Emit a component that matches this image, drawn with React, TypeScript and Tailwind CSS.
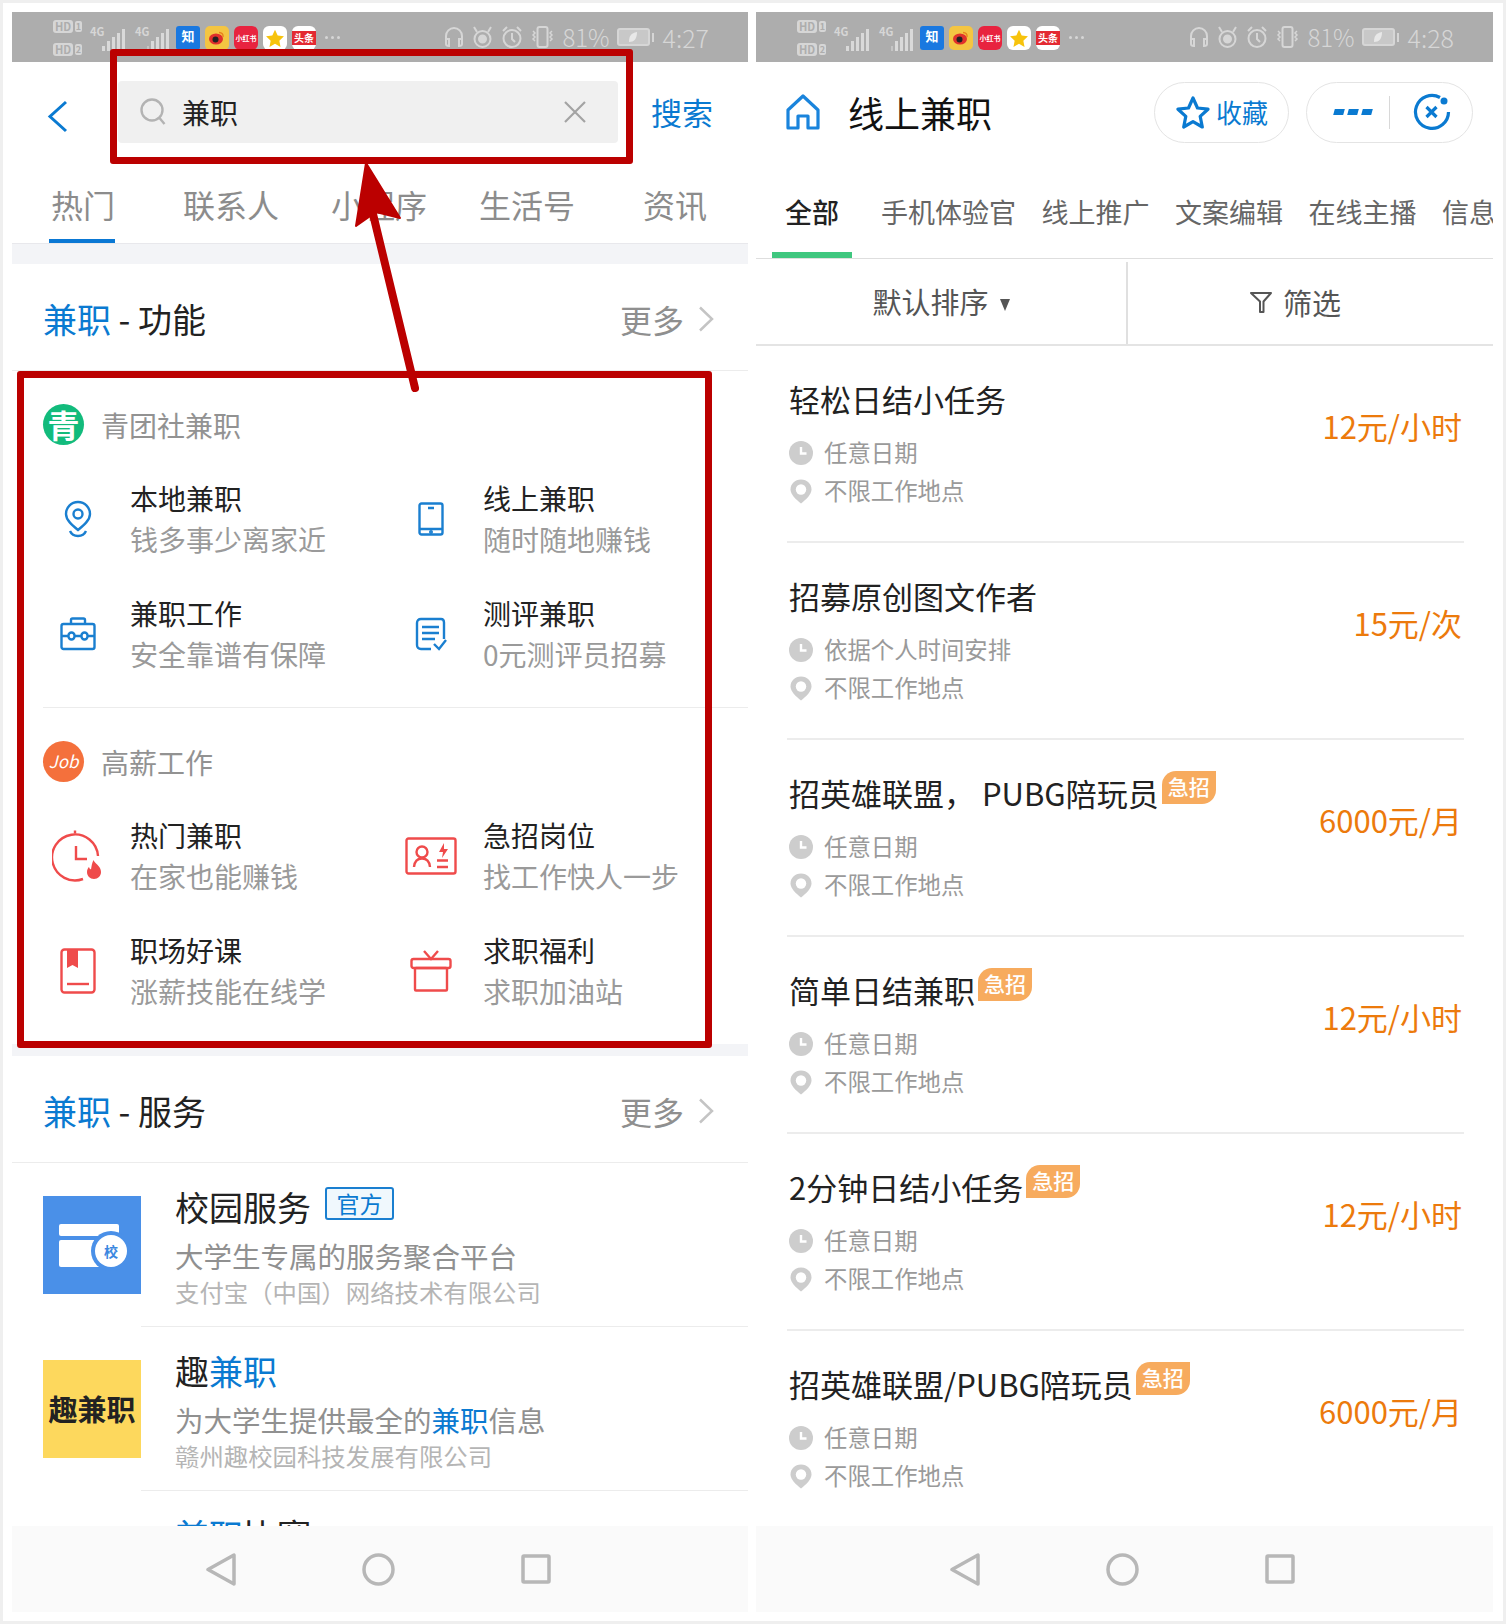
import React from "react";

const BLUE = "#0a7ad1";

function Clock() {
  return (
    <svg width="24" height="24" viewBox="0 0 24 24">
      <circle cx="12" cy="12" r="12" fill="#cdcdcd" />
      <path d="M12 6v6.5h5.5" fill="none" stroke="#fff" strokeWidth="2.4" />
    </svg>
  );
}

function Pin() {
  return (
    <svg width="24" height="25" viewBox="0 0 24 25">
      <path d="M12 0.5C5.8 0.5 1.5 5 1.5 10.5c0 5 5.5 10 10.5 14 5-4 10.5-9 10.5-14C22.500 5 18.200 0.5 12 0.5z" fill="#cdcdcd" />
      <circle cx="12" cy="10.500" r="5.200" fill="#fff" />
    </svg>
  );
}

function StatusIcons() {
  const Hd = ({ n }: { n: string }) => (
    <div className="flex items-center gap-[2px] h-[13px]">
      <span className="w-[20px] h-[13px] rounded-[3px] bg-[#d6d6d6] text-[#adadad] text-[11px] leading-[13px] font-bold text-center">HD</span>
      <span className="w-[7px] h-[11px] rounded-[2px] bg-[#d6d6d6] text-[#adadad] text-[9px] leading-[11px] font-bold text-center">{n}</span>
    </div>
  );
  const Signal = ({ dim }: { dim?: boolean }) => (
    <div className="flex items-end gap-[2px] h-[22px] ml-[-1px] mt-[5px]">
      {[5, 10, 14, 18, 22].map((h, i) => (
        <div key={h} className={dim && i < 1 ? "w-[2px] bg-[#c4c4c4]" : "w-[3px] bg-[#d9d9d9]"} style={{ height: h }} />
      ))}
    </div>
  );
  return (
    <div className="flex items-start h-full pl-[41px]">
      <div className="flex flex-col gap-[10px] pt-[8px] w-[37px]">
        <Hd n="1" />
        <Hd n="2" />
      </div>
      <div className="flex items-start mt-[12px]">
        <span className="text-[#d6d6d6] text-[11px] leading-[14px] font-bold w-[13px]">4G</span>
        <Signal />
      </div>
      <div className="flex items-start mt-[12px] ml-[10px]">
        <span className="text-[#d6d6d6] text-[11px] leading-[14px] font-bold w-[13px]">4G</span>
        <Signal dim />
      </div>
      <div className="flex items-start gap-[5px] ml-[7px] mt-[14px]">
        <div className="w-[24px] h-[24px] bg-[#1a78e0] text-white text-[13px] leading-[20px] font-bold text-center overflow-hidden rounded-[3px]">知</div>
        <div className="w-[24px] h-[24px] rounded-[5px] bg-[#f4c542] flex items-center justify-center">
          <svg width="16" height="14" viewBox="0 0 16 14">
            <ellipse cx="7" cy="8" rx="7" ry="5.500" fill="#e0312c" />
            <circle cx="6.500" cy="8.500" r="3" fill="#222" />
            <path d="M10 1.500c3 0 4.500 2 4 4.500" fill="none" stroke="#e8821e" strokeWidth="1.400" />
          </svg>
        </div>
        <div className="w-[24px] h-[24px] rounded-[6px] bg-[#e8233f] text-white text-[7px] leading-[24px] font-bold text-center whitespace-nowrap overflow-hidden">小红书</div>
        <div className="w-[24px] h-[24px] rounded-[6px] bg-white flex items-center justify-center">
          <svg width="20" height="19" viewBox="0 0 24 24">
            <path d="M12 1l3.400 7.300 7.900 1-5.800 5.400 1.500 7.900-7-3.900-7 3.900 1.500-7.900L.7 9.300l7.900-1z" fill="#f7c30c" />
          </svg>
        </div>
        <div className="w-[24px] h-[24px] rounded-[6px] bg-white flex items-center justify-center">
          <div className="w-[24px] h-[14px] bg-[#e32a32] text-white text-[10px] leading-[14px] font-bold text-center whitespace-nowrap overflow-hidden">头条</div>
        </div>
        <div className="flex gap-[3px] ml-[4px] mt-[10px]">
          <div className="w-[3px] h-[3px] rounded-full bg-[#d6d6d6]" />
          <div className="w-[3px] h-[3px] rounded-full bg-[#d6d6d6]" />
          <div className="w-[3px] h-[3px] rounded-full bg-[#d6d6d6]" />
        </div>
      </div>
    </div>
  );
}

function StatusRight({ time }: { time: string }) {
  return (
    <div className="flex items-center gap-[7px] h-full pr-[39px] text-[#d6d6d6]">
      <svg width="20" height="22" viewBox="0 0 20 22" fill="none" stroke="#d6d6d6" strokeWidth="2">
        <path d="M2 14V10a8 8 0 0 1 16 0v4" />
        <path d="M2 13v5c0 1.500 1 2 3 2v-7H2zM18 13v5c0 1.500-1 2-3 2v-7h3z" />
      </svg>
      <svg width="23" height="22" viewBox="0 0 23 22" fill="none" stroke="#d6d6d6" strokeWidth="2">
        <circle cx="11.500" cy="13" r="8" />
        <circle cx="11.500" cy="13" r="3.500" fill="#d6d6d6" />
        <path d="M3 1l3 5M20 1l-3 5" />
      </svg>
      <svg width="22" height="22" viewBox="0 0 22 22" fill="none" stroke="#d6d6d6" strokeWidth="2">
        <circle cx="11" cy="12.500" r="8.500" />
        <path d="M11 7v6l3 3M2 5l4-4M20 5l-4-4" />
      </svg>
      <svg width="25" height="22" viewBox="0 0 25 22" fill="none" stroke="#d6d6d6" strokeWidth="2">
        <rect x="7.500" y="1" width="10" height="20" rx="2" />
        <path d="M3 5l2 2-2 2 2 2-2 2 2 2M22 5l-2 2 2 2-2 2 2 2-2 2" strokeWidth="1.500" />
      </svg>
      <span className="text-[24px] leading-none font-light">81%</span>
      <div className="flex items-center gap-[2px]">
        <div className="w-[33px] h-[18px] rounded-[3px] border-2 border-[#d6d6d6] bg-[#c8c8c8] flex items-center justify-center">
          <svg width="10" height="12" viewBox="0 0 10 12">
            <path d="M9 1C3 2 1 5 1 11c5 0 8-3 8-10z" fill="#e8e8e8" />
          </svg>
        </div>
        <div className="w-[2px] h-[9px] bg-[#d6d6d6]" />
      </div>
      <span className="text-[25px] leading-none font-light ml-[2px]">{time}</span>
    </div>
  );
}

function StatusBar({ time }: { time: string }) {
  return (
    <div className="h-[50px] shrink-0 bg-[#adadad] flex justify-between overflow-hidden">
      <StatusIcons />
      <StatusRight time={time} />
    </div>
  );
}

function NavBar() {
  return (
    <div className="h-[86px] shrink-0 bg-[#fafafa] flex items-center pl-[194px] gap-[126px]">
      <svg width="30" height="33" viewBox="0 0 30 33" fill="none" stroke="#b7b7b7" strokeWidth="3.500" strokeLinejoin="round">
        <path d="M28 2v29L2 16.500z" />
      </svg>
      <svg width="33" height="33" viewBox="0 0 33 33" fill="none" stroke="#b7b7b7" strokeWidth="3.500">
        <circle cx="16.500" cy="16.500" r="14.500" />
      </svg>
      <svg width="30" height="30" viewBox="0 0 30 30" fill="none" stroke="#b7b7b7" strokeWidth="3.500">
        <rect x="2" y="2" width="26" height="26" rx="1" />
      </svg>
    </div>
  );
}

function SectionHead({ name }: { name: string }) {
  return (
    <div className="h-[107px] pl-[31px] pr-[34px] pt-[3px] flex items-center justify-between border-b border-[#ececec] ml-0">
      <div className="text-[34px] leading-[44px] text-[#222]">
        <span className="text-[#0a7ad1]">兼职</span> - {name}
      </div>
      <div className="flex items-center gap-[14px]">
        <span className="text-[32px] leading-[44px] text-[#8f8f8f]">更多</span>
        <svg width="16" height="26" viewBox="0 0 16 26" fill="none" stroke="#c4c4c4" strokeWidth="2.500">
          <path d="M2 1.500L14 13 2 24.500" />
        </svg>
      </div>
    </div>
  );
}

const S = { fill: "none", strokeWidth: 2.4 } as const;

const blueIcons = {
  pin: (
    <svg width="30" height="38" viewBox="0 0 30 38" stroke="#1a7fd0" {...S}>
      <path d="M15 2C8 2 3 7.500 3 14c0 6 6 11 12 16 6-5 12-10 12-16C27 7.500 22 2 15 2z" />
      <circle cx="15" cy="14" r="4.500" />
      <path d="M7 31c1.500 3.500 4.500 5 8 5s6.500-1.500 8-5" />
    </svg>
  ),
  phone: (
    <svg width="26" height="34" viewBox="0 0 26 34" stroke="#1a7fd0" {...S}>
      <rect x="1.500" y="1.500" width="23" height="31" rx="2" />
      <path d="M1.500 27h23M10 6h6" />
      <circle cx="13" cy="30" r="0.800" fill="#1a7fd0" />
    </svg>
  ),
  case: (
    <svg width="36" height="34" viewBox="0 0 36 34" stroke="#1a7fd0" {...S}>
      <rect x="1.500" y="7" width="33" height="25" rx="2" />
      <path d="M11 7V3c0-1 .8-1.500 1.500-1.500h11c.7 0 1.500.5 1.500 1.500v4M1.500 19h7M14.500 19h7M27.500 19h7" />
      <rect x="8.500" y="15.500" width="6" height="7" rx="3" />
      <rect x="21.500" y="15.500" width="6" height="7" rx="3" />
    </svg>
  ),
  doc: (
    <svg width="32" height="34" viewBox="0 0 32 34" stroke="#1a7fd0" {...S}>
      <path d="M16 32H6c-2.500 0-4-1.500-4-4V6c0-2.500 1.500-4 4-4h20c2 0 3 1.500 3 3.500V22" />
      <path d="M7 10h17M7 16h17M7 22h13" />
      <path d="M19 27l5 5 7-9" />
    </svg>
  ),
};

const redIcons = {
  clock: (
    <svg width="52" height="52" viewBox="0 0 52 52" stroke="#ef4b4b" {...S}>
      <path d="M46 26a23 23 0 1 0-15 23" />
      <path d="M23 0.500v3" />
      <path d="M24 16v13h11" />
      <path d="M41.500 30c1 3.500 7.500 6 7.500 12 0 4-3 7-7 7s-7-3-7-7c0-2.500 1-4 2-5 .5 1.500 1 2 2 2.500.5-3.500 1-6.500 2.500-9.500z" fill="#ef4b4b" stroke="none" />
    </svg>
  ),
  card: (
    <svg width="52" height="38" viewBox="0 0 52 38" stroke="#ef4b4b" {...S}>
      <rect x="1.500" y="1.500" width="49" height="35" rx="2" />
      <circle cx="17" cy="15" r="5.500" />
      <path d="M9 30c.5-5 3-8.500 8-8.500s7.500 3.500 8 8.500" />
      <path d="M32 30h11M32 23.500h11" />
      <path d="M39 6l-5 9h4l-1 6 6-9h-4z" fill="#ef4b4b" stroke="none" />
    </svg>
  ),
  book: (
    <svg width="36" height="46" viewBox="0 0 36 46" stroke="#ef4b4b" {...S}>
      <rect x="1.500" y="1.500" width="33" height="43" rx="3" />
      <path d="M7 36h22" />
      <path d="M7 2h11v18l-5.500-3L7 20z" fill="#ef4b4b" stroke="none" />
    </svg>
  ),
  gift: (
    <svg width="42" height="42" viewBox="0 0 42 42" stroke="#ef4b4b" {...S}>
      <rect x="1.500" y="9" width="39" height="9" rx="2" />
      <rect x="5" y="18" width="32" height="22.500" rx="1" />
      <path d="M14 1l7 8 7-8" />
    </svg>
  ),
};

function Item({ icon, title, sub }: { icon: React.ReactNode; title: string; sub: string }) {
  return (
    <div className="flex items-center h-[82px]">
      <div className="w-[70px] mr-[17px] flex justify-center shrink-0">{icon}</div>
      <div className="whitespace-nowrap">
        <div className="text-[28px] leading-[41px] text-[#222]">{title}</div>
        <div className="text-[28px] leading-[41px] text-[#9a9a9a]">{sub}</div>
      </div>
    </div>
  );
}

function LeftPhone() {
  return (
    <div className="w-[736px] h-[1600px] flex flex-col overflow-hidden shrink-0">
      <StatusBar time="4:27" />
      <div className="flex-1 min-h-0 overflow-hidden">
        <div className="h-[108px] flex items-center">
          <svg className="ml-[35px] mr-[50px] shrink-0" width="21" height="33" viewBox="0 0 21 33" fill="none" stroke="#0a7ad1" strokeWidth="3">
            <path d="M19 2L3 16.500 19 31" />
          </svg>
          <div className="w-[500px] h-[62px] bg-[#f0f0f0] rounded-[4px] flex items-center pl-[22px] pr-[32px] mt-[-8px]">
            <svg width="26" height="28" viewBox="0 0 26 28" fill="none" stroke="#b3b3b3" strokeWidth="2.400">
              <circle cx="12" cy="12" r="10.500" />
              <path d="M19.500 20l5 6" />
            </svg>
            <span className="ml-[16px] text-[28px] leading-[40px] text-[#222] flex-1">兼职</span>
            <svg width="22" height="22" viewBox="0 0 22 22" fill="none" stroke="#a3a3a3" strokeWidth="2.200">
              <path d="M1 1l20 20M21 1L1 21" />
            </svg>
          </div>
          <span className="ml-[33px] text-[31px] leading-[40px] text-[#0a7ad1] mt-[-8px] whitespace-nowrap">搜索</span>
        </div>
        <div className="h-[73px] flex ml-[-3px] w-[740px]">
          {["热门", "联系人", "小程序", "生活号", "资讯"].map((t, i) => (
            <div key={t} className="w-[148px] relative flex justify-center pt-[12px] text-[32px] leading-[44px] text-[#8c8c8c]">
              {t}
              {i === 0 && <div className="absolute left-[40px] bottom-0 w-[66px] h-[4px] bg-[#0a78d4]" />}
            </div>
          ))}
        </div>
        <div className="h-[21px] bg-[#f3f4f7] border-t border-[#e8e8ec]" />
        <SectionHead name="功能" />

        <div className="ml-[31px] h-[337px] border-b border-[#ececec] pt-[33px]">
          <div className="flex items-center h-[41px]">
            <div className="w-[41px] h-[41px] rounded-full bg-[#12bb7c] text-white text-[32px] leading-[40px] font-bold text-center">青</div>
            <span className="ml-[17px] text-[28px] leading-[40px] text-[#929292]">青团社兼职</span>
          </div>
          <div className="grid grid-cols-[353px_353px] gap-y-[33px] mt-[33px]">
            <Item icon={blueIcons.pin} title="本地兼职" sub="钱多事少离家近" />
            <Item icon={blueIcons.phone} title="线上兼职" sub="随时随地赚钱" />
            <Item icon={blueIcons.case} title="兼职工作" sub="安全靠谱有保障" />
            <Item icon={blueIcons.doc} title="测评兼职" sub="0元测评员招募" />
          </div>
        </div>

        <div className="ml-[31px] h-[336px] pt-[33px]">
          <div className="flex items-center h-[41px]">
            <div className="w-[41px] h-[41px] rounded-full bg-[#f4703c] text-white text-[17px] leading-[40px] italic text-center">Job</div>
            <span className="ml-[17px] text-[28px] leading-[40px] text-[#929292]">高薪工作</span>
          </div>
          <div className="grid grid-cols-[353px_353px] gap-y-[33px] mt-[33px]">
            <Item icon={redIcons.clock} title="热门兼职" sub="在家也能赚钱" />
            <Item icon={redIcons.card} title="急招岗位" sub="找工作快人一步" />
            <Item icon={redIcons.book} title="职场好课" sub="涨薪技能在线学" />
            <Item icon={redIcons.gift} title="求职福利" sub="求职加油站" />
          </div>
        </div>
        <div className="h-[12px] bg-[#f3f4f7]" />
        <SectionHead name="服务" />

        <div className="ml-[31px] flex h-[164px]">
          <div className="w-[98px] h-[98px] mt-[33px] bg-[#4a90e8] shrink-0 flex items-center justify-center">
            <svg width="98" height="98" viewBox="0 0 98 98">
              <rect x="16" y="28" width="60" height="12" rx="2" fill="#fff" />
              <rect x="16" y="44" width="60" height="27" rx="2" fill="#fff" />
              <circle cx="68" cy="55" r="20" fill="#4a90e8" />
              <circle cx="68" cy="55" r="16" fill="#fff" />
              <text x="68" y="61" textAnchor="middle" fontSize="14" fontWeight="700" fill="#3b87e0">校</text>
            </svg>
          </div>
          <div className="flex-1 pl-[34px] border-b border-[#ececec] pt-[22px] whitespace-nowrap">
            <div className="flex items-center h-[44px]">
              <span className="text-[34px] leading-[44px] text-[#222]">校园服务</span>
              <span className="ml-[14px] w-[69px] h-[33px] mt-[-8px] rounded-[3px] border-2 border-[#1a7fd0] bg-[#f0f8fd] text-[#0a7ad1] text-[23px] leading-[29px] text-center">官方</span>
            </div>
            <div className="mt-[7px] text-[28.500px] leading-[40px] text-[#909090]">大学生专属的服务聚合平台</div>
            <div className="text-[24.400px] leading-[32px] text-[#b5b5b5]">支付宝（中国）网络技术有限公司</div>
          </div>
        </div>

        <div className="ml-[31px] flex h-[164px]">
          <div className="w-[98px] h-[98px] mt-[33px] bg-[#fdd85d] shrink-0 flex items-center justify-center text-[29px] font-bold text-[#222] whitespace-nowrap">趣兼职</div>
          <div className="flex-1 pl-[34px] border-b border-[#ececec] pt-[22px] whitespace-nowrap">
            <div className="text-[34px] leading-[44px] text-[#222]">
              趣<span className="text-[#0a7ad1]">兼职</span>
            </div>
            <div className="mt-[7px] text-[28.500px] leading-[40px] text-[#909090]">
              为大学生提供最全的<span className="text-[#0a7ad1]">兼职</span>信息
            </div>
            <div className="text-[24.400px] leading-[32px] text-[#b5b5b5]">赣州趣校园科技发展有限公司</div>
          </div>
        </div>

        <div className="ml-[31px] flex h-[164px]">
          <div className="w-[98px] shrink-0" />
          <div className="flex-1 pl-[34px] pt-[22px] text-[34px] leading-[44px] text-[#222]">
            <span className="text-[#0a7ad1]">兼职</span>比赛
          </div>
        </div>
      </div>
      <NavBar />
    </div>
  );
}

const jobs = [
  { title: "轻松日结小任务", price: "12元/小时", date: "任意日期", hot: false },
  { title: "招募原创图文作者", price: "15元/次", date: "依据个人时间安排", hot: false },
  { title: "招英雄联盟， PUBG陪玩员", price: "6000元/月", date: "任意日期", hot: true },
  { title: "简单日结兼职", price: "12元/小时", date: "任意日期", hot: true },
  { title: "2分钟日结小任务", price: "12元/小时", date: "任意日期", hot: true },
  { title: "招英雄联盟/PUBG陪玩员", price: "6000元/月", date: "任意日期", hot: true },
];

function JobRow({ job }: { job: (typeof jobs)[number] }) {
  return (
    <div className="ml-[31px] mr-[29px] h-[197px] border-b-2 border-[#ececec] pl-[2px] pr-[2px] pt-[31px] flex justify-between whitespace-nowrap">
      <div>
        <div className="flex items-start h-[44px]">
          <span className="text-[31px] leading-[44px] text-[#222]">{job.title}</span>
          {job.hot && (
            <span className="ml-[3px] w-[54px] h-[33px] bg-[#f7ab5e] rounded-tl-[14px] rounded-br-[14px] text-white text-[21px] leading-[31px] font-medium text-center">急招</span>
          )}
        </div>
        <div className="mt-[13px] flex items-center h-[38px] text-[23.400px] text-[#9a9a9a]">
          <div className="w-[35px] flex"><Clock /></div>
          {job.date}
        </div>
        <div className="flex items-center h-[38px] text-[23.400px] text-[#9a9a9a]">
          <div className="w-[35px] flex"><Pin /></div>
          不限工作地点
        </div>
      </div>
      <div className="mt-[27px] text-[31px] leading-[44px] text-[#ec7a0c]">{job.price}</div>
    </div>
  );
}

function RightPhone() {
  return (
    <div className="w-[737px] h-[1600px] flex flex-col overflow-hidden shrink-0">
      <StatusBar time="4:28" />
      <div className="flex-1 min-h-0 overflow-hidden">
        <div className="h-[100px] flex items-center">
          <svg className="ml-[30px] shrink-0" width="34" height="36" viewBox="0 0 34 36" fill="none" stroke="#1a84dc" strokeWidth="3.200" strokeLinejoin="round">
            <path d="M17 2L2 16v18h10V22h10v12h10V16z" />
          </svg>
          <span className="ml-[28px] text-[36px] leading-[48px] text-[#111] whitespace-nowrap">线上兼职</span>
          <div className="ml-[162px] w-[135px] h-[61px] rounded-full border border-[#e4e4e4] flex items-center justify-center gap-[5px] shrink-0">
            <svg width="36" height="34" viewBox="0 0 36 34" fill="none" stroke="#0a7ad1" strokeWidth="3.200" strokeLinejoin="round">
              <path d="M18 3l4.500 10 10.500 1.200-7.800 7.200 2.100 10.600L18 26.600 8.700 32l2.100-10.600L3 14.200 13.500 13z" />
            </svg>
            <span className="text-[26px] leading-[36px] text-[#0a7ad1]">收藏</span>
          </div>
          <div className="ml-[17px] w-[167px] h-[61px] rounded-full border border-[#e4e4e4] flex items-center shrink-0">
            <div className="ml-[27px] flex gap-[4px]">
              <div className="w-[10px] h-[6px] bg-[#0a7ad1] skew-x-[-15deg]" />
              <div className="w-[10px] h-[6px] bg-[#0a7ad1] skew-x-[-15deg]" />
              <div className="w-[10px] h-[6px] bg-[#0a7ad1] skew-x-[-15deg]" />
            </div>
            <div className="ml-[17px] w-px h-[33px] bg-[#d8d8d8]" />
            <svg className="ml-[23px]" width="38" height="38" viewBox="0 0 38 38" fill="none" stroke="#0a7ad1" strokeWidth="3.200">
              <path d="M27 4.500A16.500 16.500 0 1 0 35.500 19" />
              <circle cx="31" cy="8" r="3.500" fill="#0a7ad1" stroke="none" />
              <path d="M13.500 14l10 10M23.500 14l-10 10" />
            </svg>
          </div>
        </div>
        <div className="h-[97px] flex border-b border-[#dedede] overflow-hidden whitespace-nowrap text-[27px] leading-[40px] text-[#666]">
          <div className="ml-[16px] w-[80px] h-[96px] shrink-0 pt-[30px] text-center text-[#222] font-medium border-b-[6px] border-[#3fc77f]">全部</div>
          <div className="ml-[29px] flex gap-[25.500px] pt-[30px]">
            <span>手机体验官</span>
            <span>线上推广</span>
            <span>文案编辑</span>
            <span>在线主播</span>
            <span>信息</span>
          </div>
        </div>
        <div className="h-[87px] flex border-b-2 border-[#e4e4e4] text-[29px] leading-[40px] text-[#555] whitespace-nowrap">
          <div className="w-[370px] flex items-center justify-center gap-[11px] pb-[1px]">
            默认排序
            <svg className="mt-[7px]" width="10" height="12" viewBox="0 0 10 12">
              <path d="M0 0h10L5 12z" fill="#555" />
            </svg>
          </div>
          <div className="flex-1 flex items-center justify-center gap-[11px] pr-[30px] border-l-2 border-[#e0e0e0] mt-[3px] pb-[3px]">
            <svg width="22" height="22" viewBox="0 0 22 22" fill="none" stroke="#555" strokeWidth="2">
              <path d="M1 2h20l-7.500 8.500V21H10V10.500z" strokeLinejoin="round" />
            </svg>
            筛选
          </div>
        </div>
        {jobs.map((j, i) => (
          <JobRow key={i} job={j} />
        ))}
      </div>
      <NavBar />
    </div>
  );
}

export default function App() {
  return (
    <div
      lang="zh-CN"
      className="relative w-[1506px] h-[1624px] bg-white border-[3px] border-[#efefef] pt-[9px] pl-[9px] flex gap-[8px] overflow-hidden font-['Noto_Sans_CJK_SC','Liberation_Sans',sans-serif]"
    >
      <LeftPhone />
      <RightPhone />
      <svg className="absolute left-[-3px] top-[-3px] pointer-events-none" width="500" height="420" viewBox="0 0 500 420">
        <path d="M415 388L373 214" stroke="#bb0000" strokeWidth="8" strokeLinecap="round" fill="none" />
        <path d="M366 163L400 218 376 212 356 226z" fill="#bb0000" stroke="#bb0000" strokeWidth="2" strokeLinejoin="round" />
      </svg>
      <div className="absolute left-[107px] top-[46px] w-[523px] h-[115px] border-[7px] border-[#bb0000] rounded-[3px]" />
      <div className="absolute left-[14px] top-[368px] w-[695px] h-[677px] border-[7px] border-[#bb0000] rounded-[3px]" />
    </div>
  );
}
